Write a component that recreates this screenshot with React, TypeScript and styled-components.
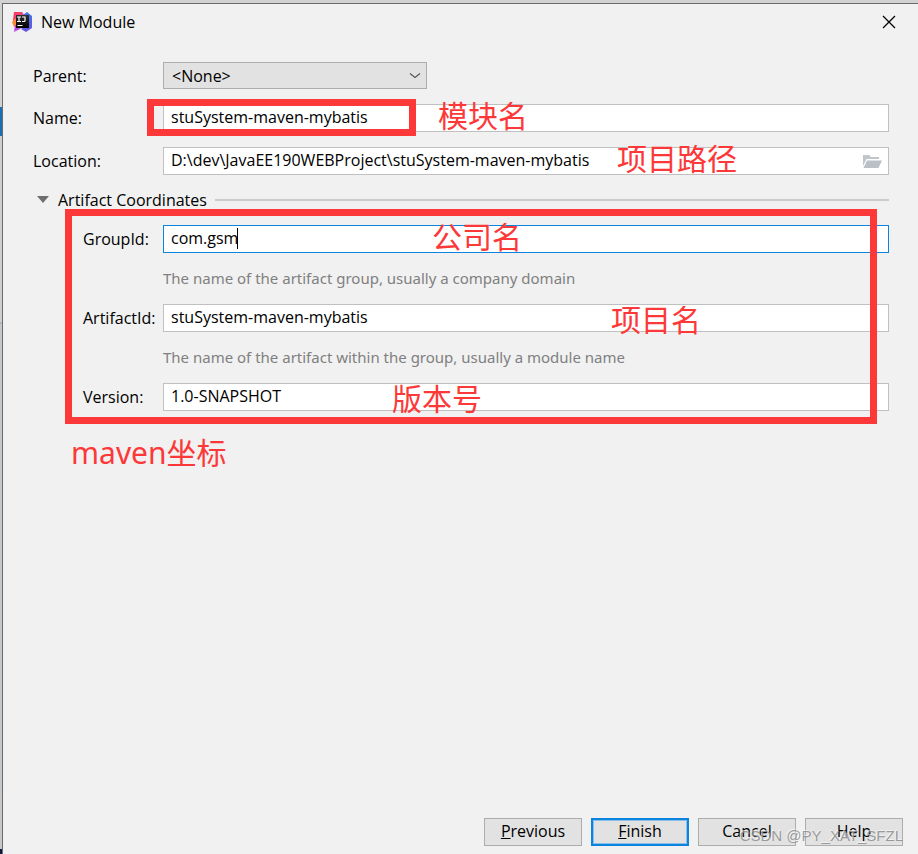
import React, { useState } from "react";
import styled, { createGlobalStyle, css } from "styled-components";

const UI_FONT = `"Open Sans", "Noto Sans CJK SC", sans-serif`;
const NOTE_FONT = `"Noto Sans", "Noto Sans CJK SC", sans-serif`;
const RED = "#fc3838";

const GlobalStyle = createGlobalStyle`
  *, *::before, *::after { box-sizing: border-box; }
  body {
    margin: 0;
    font-family: ${UI_FONT};
    font-size: 16px;
    line-height: 20px;
    color: #000;
    background: #f1f1f1;
  }
  button, input, select { font: inherit; color: inherit; }
`;

const Desktop = styled.div`
  display: flex;
  min-height: 100vh;
  padding: 3px 0 0 2px;
  background: linear-gradient(
    #d2d2d2 0 107px,
    #1a6fb5 107px 136px,
    #cdd0d3 136px 322px,
    #b4b8bb 322px 324px,
    #c3c8cc 324px 796px,
    #c8c8c8 796px 849px,
    #101840 849px
  );
`;

const Dialog = styled.form`
  position: relative;
  flex: 1;
  min-width: 0;
  display: flex;
  flex-direction: column;
  border-top: 1px solid #6b6b6b;
  border-left: 1px solid #6b6b6b;
  background: #f1f1f1;
`;

const TitleBar = styled.header`
  display: flex;
  align-items: center;
  gap: 8px;
  height: 36px;
  padding: 0 20px 0 9px;
`;

const Title = styled.h1`
  flex: 1;
  margin: 0;
  font-size: 16px;
  font-weight: 400;
`;

const CloseButton = styled.button`
  display: flex;
  padding: 2px;
  border: 0;
  background: none;
`;

const Body = styled.main`
  flex: 1;
  padding: 22px 29px 0 30px;
`;

const Rows = styled.div`
  display: grid;
  grid-template-rows: 27px 28px 28px;
  gap: 15px;
`;

const Row = styled.div<{ $nested?: boolean }>`
  display: grid;
  grid-template-columns: ${(p) => (p.$nested ? 80 : 130)}px 1fr;
  align-items: center;
`;

const FieldBox = styled.div<{ $narrow?: boolean }>`
  position: relative;
  ${(p) => p.$narrow && css`width: 264px;`}
`;

const TextInput = styled.input<{ $active?: boolean }>`
  display: block;
  width: 100%;
  height: 28px;
  padding: 0 7px 2px;
  border: 1px solid ${(p) => (p.$active ? "#0a84dd" : "#c0c0c0")};
  border-radius: 0;
  outline: 0;
  background: #fff;
`;

const Caret = styled.span`
  position: absolute;
  left: 74px;
  top: 3px;
  width: 1px;
  height: 21px;
  background: #000;
`;

const Select = styled.select`
  display: block;
  appearance: none;
  width: 100%;
  height: 27px;
  padding: 0 8px;
  border: 1px solid #adadad;
  border-radius: 0;
  outline: 0;
  background: #e2e2e2;
`;

const Chevron = styled.svg`
  position: absolute;
  right: 6px;
  top: 9px;
  pointer-events: none;
`;

const BrowseButton = styled.button`
  position: absolute;
  right: 7px;
  top: 7px;
  display: flex;
  padding: 0;
  border: 0;
  background: none;
`;

const SectionHeader = styled.button`
  display: flex;
  align-items: center;
  width: 100%;
  height: 50px;
  padding: 0 0 0 4px;
  border: 0;
  background: none;
  text-align: left;

  svg { margin-right: 9px; }

  &::after {
    content: "";
    flex: 1;
    height: 2px;
    margin-left: 8px;
    background: #cbcbcb;
  }
`;

const Coordinates = styled.section`
  position: relative;
  padding-left: 50px;
`;

const Hint = styled.p`
  margin: 0;
  padding-left: 80px;
  font-family: ${NOTE_FONT};
  font-size: 15px;
  line-height: 51px;
  color: #808080;
`;

const NameMarker = styled.div`
  position: absolute;
  inset: -5px auto auto -16px;
  width: 269px;
  height: 37px;
  border: 7px solid ${RED};
  pointer-events: none;
`;

const CoordinatesMarker = styled.div`
  position: absolute;
  inset: -16px 12px -13px 32px;
  border: 7px solid ${RED};
  pointer-events: none;
`;

const Note = styled.span<{ $left: number; $low?: boolean }>`
  position: absolute;
  left: ${(p) => p.$left}px;
  top: ${(p) => (p.$low ? -4 : -8)}px;
  font-size: 30px;
  line-height: 40px;
  white-space: nowrap;
  color: ${RED};
  pointer-events: none;
`;

const Caption = styled.p`
  margin: 22px 0 0 38px;
  font-family: ${NOTE_FONT};
  font-size: 30px;
  line-height: 40px;
  color: ${RED};
`;

const Footer = styled.footer`
  display: flex;
  justify-content: flex-end;
  gap: 9px;
  padding: 0 15px 8px;
`;

const PushButton = styled.button<{ $primary?: boolean }>`
  width: 98px;
  height: 28px;
  padding: 0 0 2px;
  border: ${(p) => (p.$primary ? "2px solid #0a84dd" : "1px solid #adadad")};
  box-shadow: ${(p) => (p.$primary ? "inset 0 0 0 1px #8cc0e8" : "none")};
  border-radius: 0;
  background: #e2e2e2;
`;

const Watermark = styled.span`
  position: absolute;
  right: 15px;
  bottom: 8px;
  font-family: "Liberation Sans", sans-serif;
  font-size: 15px;
  color: rgba(140, 140, 140, 0.85);
  text-shadow: -1px -1px 0 rgba(255, 255, 255, 0.6);
  pointer-events: none;
`;

function AppLogo() {
  return (
    <svg width="21" height="22" viewBox="0 0 21 22" aria-hidden="true">
      <defs>
        <linearGradient id="logoPink" x1="0" y1="0" x2="1" y2="1">
          <stop offset="0" stopColor="#fc3b55" />
          <stop offset="1" stopColor="#d94bc0" />
        </linearGradient>
        <linearGradient id="logoBlue" x1="0" y1="0" x2="0" y2="1">
          <stop offset="0" stopColor="#3d74e8" />
          <stop offset="1" stopColor="#6b55e4" />
        </linearGradient>
        <linearGradient id="logoScreen" x1="0" y1="0" x2="0" y2="1">
          <stop offset="0" stopColor="#303030" />
          <stop offset="1" stopColor="#000" />
        </linearGradient>
      </defs>
      <path d="M2 1h8l3 4-2 12-8-2-2-6z" fill="url(#logoPink)" />
      <path d="M0 11 4 7l2 7-4 2z" fill="#fc8a35" />
      <path d="M3 14h9l-4 4-6 3z" fill="#b84be0" />
      <path d="M11 4l4-3 5 4v12l-6 4-5-3 5-3z" fill="url(#logoBlue)" />
      <path d="M4 4h13v13H4z" fill="url(#logoScreen)" />
      <path
        d="M5 6h4M7 6v5M5 10.500h4M10 6h3v3.500q0 1-1 1h-2M5.500 14.500h5"
        fill="none"
        stroke="#fff"
        strokeWidth="1.2"
      />
    </svg>
  );
}

function FolderIcon() {
  return (
    <svg width="19" height="15" viewBox="0 0 19 15" aria-hidden="true">
      <path d="M0 1h6l2 2h8v2H3.5L0 12z" fill="#c0c6ca" />
      <path d="M4 6.5h15L15.5 14H.5z" fill="#bac1c6" />
    </svg>
  );
}

export default function App() {
  const [parent, setParent] = useState("none");
  const [name, setName] = useState("stuSystem-maven-mybatis");
  const [location, setLocation] = useState(
    "D:\\dev\\JavaEE190WEBProject\\stuSystem-maven-mybatis"
  );
  const [groupId, setGroupId] = useState("com.gsm");
  const [artifactId, setArtifactId] = useState("stuSystem-maven-mybatis");
  const [version, setVersion] = useState("1.0-SNAPSHOT");
  const [open, setOpen] = useState(true);

  return (
    <>
      <GlobalStyle />
      <Desktop>
        <Dialog onSubmit={(e) => e.preventDefault()}>
          <TitleBar>
            <AppLogo />
            <Title>New Module</Title>
            <CloseButton type="button" aria-label="Close">
              <svg width="14" height="14" viewBox="0 0 14 14" aria-hidden="true">
                <path d="M1 1l12 12M13 1 1 13" stroke="#000" strokeWidth="1.3" />
              </svg>
            </CloseButton>
          </TitleBar>

          <Body>
            <Rows>
              <Row>
                <label htmlFor="parent">Parent:</label>
                <FieldBox $narrow>
                  <Select
                    id="parent"
                    value={parent}
                    onChange={(e) => setParent(e.target.value)}
                  >
                    <option value="none">&lt;None&gt;</option>
                  </Select>
                  <Chevron width="12" height="9" viewBox="0 0 12 9" aria-hidden="true">
                    <path d="M1 2.5 6 6.500 11 2.500" fill="none" stroke="#555" strokeWidth="1.2" />
                  </Chevron>
                </FieldBox>
              </Row>
              <Row>
                <label htmlFor="name">Name:</label>
                <FieldBox>
                  <TextInput id="name" value={name} onChange={(e) => setName(e.target.value)} />
                  <NameMarker />
                  <Note $left={275}>模块名</Note>
                </FieldBox>
              </Row>
              <Row>
                <label htmlFor="location">Location:</label>
                <FieldBox>
                  <TextInput
                    id="location"
                    value={location}
                    onChange={(e) => setLocation(e.target.value)}
                  />
                  <BrowseButton type="button" aria-label="Browse">
                    <FolderIcon />
                  </BrowseButton>
                  <Note $left={454}>项目路径</Note>
                </FieldBox>
              </Row>
            </Rows>

            <SectionHeader type="button" aria-expanded={open} onClick={() => setOpen(!open)}>
              <svg width="12" height="8" viewBox="0 0 12 8" aria-hidden="true">
                <path d="M0 0h12L6 7z" fill="#6e6e6e" />
              </svg>
              Artifact Coordinates
            </SectionHeader>

            {open && (
              <Coordinates>
                <Row $nested>
                  <label htmlFor="groupId">GroupId:</label>
                  <FieldBox>
                    <TextInput
                      id="groupId"
                      $active
                      value={groupId}
                      onChange={(e) => setGroupId(e.target.value)}
                    />
                    <Caret />
                    <Note $left={269}>公司名</Note>
                  </FieldBox>
                </Row>
                <Hint>The name of the artifact group, usually a company domain</Hint>
                <Row $nested>
                  <label htmlFor="artifactId">ArtifactId:</label>
                  <FieldBox>
                    <TextInput
                      id="artifactId"
                      value={artifactId}
                      onChange={(e) => setArtifactId(e.target.value)}
                    />
                    <Note $left={448} $low>项目名</Note>
                  </FieldBox>
                </Row>
                <Hint>The name of the artifact within the group, usually a module name</Hint>
                <Row $nested>
                  <label htmlFor="version">Version:</label>
                  <FieldBox>
                    <TextInput
                      id="version"
                      value={version}
                      onChange={(e) => setVersion(e.target.value)}
                    />
                    <Note $left={229} $low>版本号</Note>
                  </FieldBox>
                </Row>
                <CoordinatesMarker />
              </Coordinates>
            )}
            <Caption>maven坐标</Caption>
          </Body>

          <Footer>
            <PushButton type="button">
              <u>P</u>revious
            </PushButton>
            <PushButton type="submit" $primary>
              <u>F</u>inish
            </PushButton>
            <PushButton type="button">Cancel</PushButton>
            <PushButton type="button">Help</PushButton>
          </Footer>
          <Watermark>CSDN @PY_XAT_SFZL</Watermark>
        </Dialog>
      </Desktop>
    </>
  );
}
